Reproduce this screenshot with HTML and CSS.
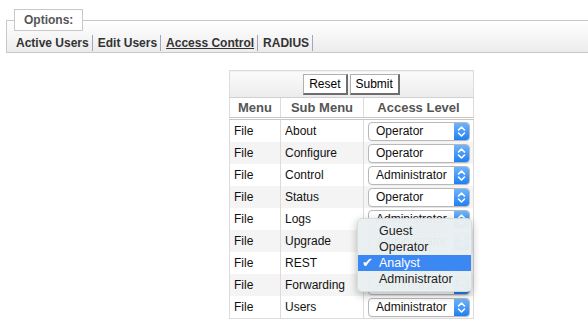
FILE: index.html
```html
<!DOCTYPE html>
<html lang="en">
<head>
    <meta charset="UTF-8">
    <title>Access Control</title>
    <link rel="stylesheet" href="styles.css">
</head>
<body>

    <fieldset class="options">
        <legend>Options:</legend>
        <nav class="tabs">
            <a href="#">Active Users</a><a href="#">Edit Users</a><a href="#" class="current">Access Control</a><a href="#">RADIUS</a>
        </nav>
    </fieldset>

    <main class="content">
        <table class="access">
            <colgroup>
                <col class="c-menu">
                <col class="c-sub">
                <col class="c-level">
            </colgroup>
            <thead>
                <tr class="actions">
                    <td colspan="3">
                        <button type="reset">Reset</button><button type="submit">Submit</button>
                    </td>
                </tr>
                <tr class="heads">
                    <th>Menu</th>
                    <th>Sub Menu</th>
                    <th>Access Level</th>
                </tr>
            </thead>
            <tbody id="rows"></tbody>
        </table>
    </main>

    <script>
        const rows = [
            ['File', 'About', 'Operator'],
            ['File', 'Configure', 'Operator'],
            ['File', 'Control', 'Administrator'],
            ['File', 'Status', 'Operator'],
            ['File', 'Logs', 'Administrator'],
            ['File', 'Upgrade', 'Administrator'],
            ['File', 'REST', 'Analyst', true],
            ['File', 'Forwarding', 'Administrator'],
            ['File', 'Users', 'Administrator']
        ];
        const levels = ['Guest', 'Operator', 'Analyst', 'Administrator'];

        const arrow = '<svg width="15" height="17" viewBox="0 0 15 17"><path d="M4.5 7 L7.5 4 L10.5 7 M4.5 10 L7.5 13 L10.5 10" fill="none" stroke="#fff" stroke-width="1.6" stroke-linecap="round" stroke-linejoin="round"/></svg>';

        const body = document.getElementById('rows');
        rows.forEach(function (r) {
            const tr = document.createElement('tr');
            let html = '<td>' + r[0] + '</td><td>' + r[1] + '</td><td><div class="select">'
                + '<span class="value">' + r[2] + '</span><span class="arrow">' + arrow + '</span>';
            if (r[3]) {
                // menu shown open over the REST select
                html += '<ul class="popup">';
                levels.forEach(function (l) {
                    html += '<li' + (l === r[2] ? ' class="picked"' : '') + '>' + l + '</li>';
                });
                html += '</ul>';
            }
            html += '</div></td>';
            tr.innerHTML = html;
            body.appendChild(tr);
        });
    </script>

</body>
</html>
```

FILE: styles.css
```css
body {
    margin: 0;
    font-family: "Liberation Sans", Arial, sans-serif;
    font-size: 12px;
    color: #111;
    background: #fff;
}

/* options bar */
.options {
    margin: 9px -20px 0 6px;
    padding: 0 0 0 7px;
    border: 1px solid #c8c8c8;
    border-right: none;
    background: linear-gradient(#fff, #ececec);
}

.options legend {
    padding: 0 9px;
    border: 1px solid #c8c8c8;
    background: #fff;
    font-weight: bold;
    font-size: 12px;
    line-height: 20px;
    color: #555;
}

.tabs {
    padding: 4px 0 1px 0;
    line-height: 16px;
}

.tabs a {
    display: inline-block;
    padding: 0 3px 0 2px;
    margin-right: 2px;
    border-right: 1px solid #a4a4bc;
    font-weight: bold;
    color: #333;
    text-decoration: none;
}

.tabs a + a {
    padding-left: 3px;
}

.tabs a.current {
    text-decoration: underline;
}

/* table */
.content {
    padding: 17px 0 0 229px;
}

.access {
    border-collapse: collapse;
    border: 1px solid #dcdcdc;
}

.c-menu { width: 51px; }
.c-sub { width: 83px; }
.c-level { width: 110px; }

.actions td {
    height: 26px;
    padding: 0;
    text-align: center;
    background: linear-gradient(#fbfbfb, #ececec);
    border-bottom: 1px solid #d0d0d0;
}

.actions button {
    height: 21px;
    margin: 0 1px;
    padding: 0 5px;
    font-family: "Liberation Sans", Arial, sans-serif;
    font-size: 12px;
    color: #000;
    background: #fff;
    border-style: solid;
    border-width: 1px 2px 2px 1px;
    border-color: #b0b0b0 #6e6e6e #6e6e6e #b0b0b0;
    vertical-align: middle;
}

.heads th {
    height: 19px;
    padding: 0;
    font-size: 13px;
    color: #555;
    background: #fff;
    border-left: 1px solid #dcdcdc;
    border-bottom: 3px double #c8c8c8;
}

tbody td {
    height: 22px;
    padding: 0 0 0 4px;
    border-left: 1px solid #dcdcdc;
}

tbody tr:nth-child(even) td {
    background: #f4f4f4;
}

tbody td:last-child {
    padding: 0 3px 0 4px;
}

/* select look */
.select {
    position: relative;
    display: flex;
    align-items: center;
    height: 17px;
    border: 1px solid #b8b8b8;
    border-radius: 4px;
    background: #fff;
    box-shadow: 0 1px 0 rgba(0, 0, 0, 0.06);
}

.select .value {
    flex: 1;
    padding-left: 7px;
    color: #111;
}

.select .arrow {
    display: flex;
    width: 15px;
    height: 17px;
    border-radius: 0 3px 3px 0;
    background: linear-gradient(#6fb4fb, #1f7ff4);
}

.popup {
    position: absolute;
    left: -12px;
    top: -37px;
    width: 113px;
    margin: 0;
    padding: 4px 0;
    list-style: none;
    border-radius: 5px;
    background: rgba(233, 239, 241, 0.97);
    border: 1px solid rgba(0, 0, 0, 0.08);
    box-shadow: 0 3px 9px rgba(0, 0, 0, 0.28);
    z-index: 2;
}

.popup li {
    position: relative;
    height: 16px;
    line-height: 16px;
    padding-left: 21px;
    color: #222;
    font-size: 12.5px;
}

.popup li.picked {
    background: #3c88f3;
    color: #fff;
}

.popup li.picked::before {
    content: "\2714";
    position: absolute;
    left: 4px;
    font-size: 13px;
}
```
